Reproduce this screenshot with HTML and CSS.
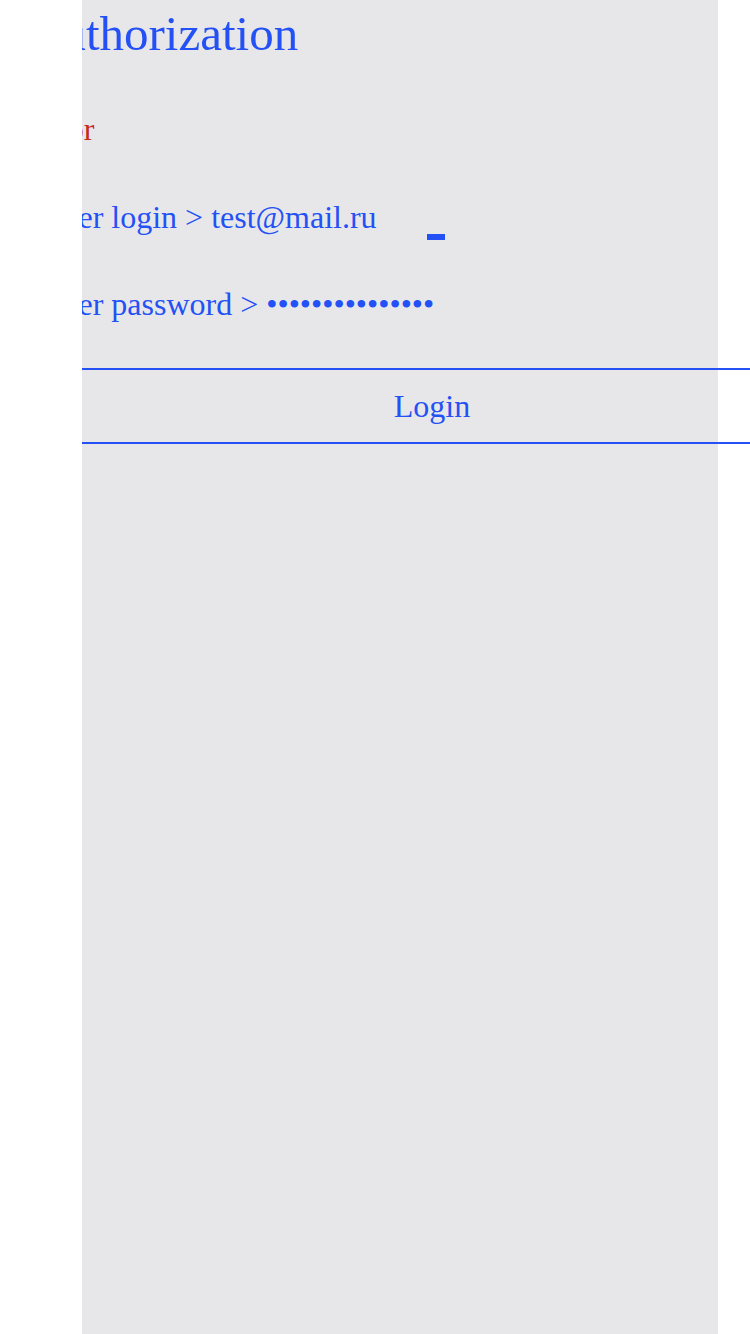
FILE: index.html
```html
<!DOCTYPE html>
<html lang="en">
<head>
<meta charset="utf-8">
<title>Authorization</title>
<link rel="stylesheet" href="styles.css">
</head>
<body>
<div class="frame">
  <div class="panel">
    <div class="content">
      <h2 class="title">Authorization</h2>
      <div class="error">Error</div>
      <div class="row row-login"><span class="label">Enter login &gt; </span><span class="value value-login">test@mail.ru</span><span class="caret"></span></div>
      <div class="row row-pass"><span class="label">Enter password &gt; </span><span class="value">&bull;&bull;&bull;&bull;&bull;&bull;&bull;&bull;&bull;&bull;&bull;&bull;&bull;&bull;&bull;</span></div>
      <button class="login-btn" type="button">Login</button>
    </div>
  </div>
</div>
</body>
</html>
```

FILE: styles.css
```css
html, body {
  margin: 0;
  padding: 0;
  background: #ffffff;
}

body {
  font-family: "Liberation Serif", "Times New Roman", serif;
  font-size: 32px;
  color: #2451f5;
  overflow: hidden;
}

.frame {
  margin-left: 82px;
  width: 668px;
  height: 1334px;
  overflow: hidden;
}

.panel {
  width: 636px;
  height: 1334px;
  background: #e7e7ea;
}

.content {
  margin-left: -56px;
  padding-top: 6px;
  width: 900px;
}

.title {
  margin: 0;
  font-size: 49px;
  line-height: 56px;
  font-weight: normal;
  height: 56px;
  white-space: nowrap;
}

.error {
  margin-top: 47px;
  padding-left: 1px;
  color: #c42b1c;
  line-height: 40px;
  height: 40px;
}

.row {
  line-height: 40px;
  height: 40px;
  white-space: nowrap;
  padding-left: 8px;
}

.row-login {
  margin-top: 48px;
}

.row-pass {
  margin-top: 47px;
}

.value-login {
  display: inline-block;
  width: 216px;
}

.caret {
  display: inline-block;
  width: 18px;
  height: 6px;
  background: #2451f5;
  vertical-align: -12px;
}

.login-btn {
  display: block;
  margin: 44px 0 0 0;
  width: 812px;
  height: 76px;
  padding: 0;
  background: transparent;
  border: none;
  border-top: 2px solid #2451f5;
  border-bottom: 2px solid #2451f5;
  font-family: "Liberation Serif", "Times New Roman", serif;
  font-size: 32px;
  color: #2451f5;
  text-align: center;
  line-height: 72px;
}
```
